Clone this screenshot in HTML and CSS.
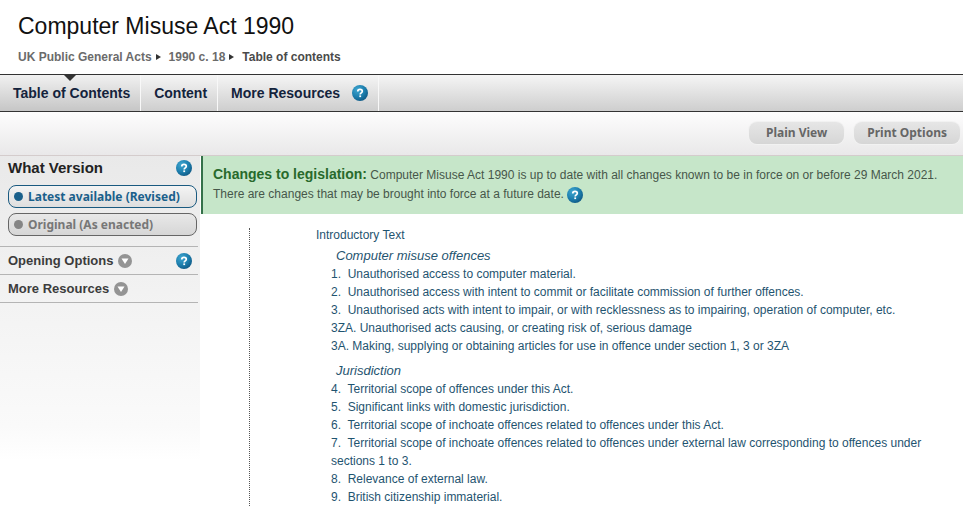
FILE: index.html
```
<!DOCTYPE html>
<html lang="en">
<head>
<meta charset="utf-8">
<title>Computer Misuse Act 1990</title>
<link rel="stylesheet" href="styles.css">
</head>
<body>
<svg class="defs" aria-hidden="true">
  <defs>
    <radialGradient id="blue" cx="0.35" cy="0.3" r="0.8">
      <stop offset="0" stop-color="#3fa6d0"/>
      <stop offset="0.55" stop-color="#1d7fae"/>
      <stop offset="1" stop-color="#0d5480"/>
    </radialGradient>
    <symbol id="help" viewBox="0 0 16 16">
      <circle cx="8" cy="8" r="8" fill="url(#blue)"/>
      <path d="M5.8 6.4C5.8 4.9 6.8 4.4 8 4.4s2.3.6 2.3 1.9c0 1.500-2.100 1.600-2.100 3.100" fill="none" stroke="#fff" stroke-width="1.700"/>
      <rect x="7.300" y="10.400" width="1.800" height="1.700" fill="#fff"/>
    </symbol>
    <symbol id="toggle" viewBox="0 0 14 14">
      <circle cx="7" cy="7" r="7" fill="#949494"/>
      <path d="M3.500 4.500h7L7 10z" fill="#fff"/>
    </symbol>
  </defs>
</svg>
<header class="header">
  <h1 class="title">Computer Misuse Act 1990</h1>
  <nav class="crumbs" aria-label="Breadcrumb">
    <a href="#acts">UK Public General Acts</a><i class="arrow"></i>
    <a href="#chapter">1990 c. 18</a><i class="arrow"></i>
    <span class="current">Table of contents</span>
  </nav>
</header>
<nav class="tabs" aria-label="Legislation">
  <a class="tab active" href="#toc">Table of Contents</a>
  <a class="tab" href="#content">Content</a>
  <div class="tab wide"><a href="#more">More Resources</a><a class="help" href="#help" aria-label="Help"><svg><use href="#help"/></svg></a></div>
</nav>
<div class="toolbar">
  <button class="tool" type="button">Plain View</button>
  <button class="tool" type="button">Print Options</button>
</div>
<div class="layout">
  <aside class="side">
    <section class="version">
      <div class="side-head"><h2 class="strong">What Version</h2><a class="help" href="#help" aria-label="Help"><svg><use href="#help"/></svg></a></div>
      <button class="pill selected" type="button"><i class="dot"></i>Latest available (Revised)</button>
      <button class="pill" type="button"><i class="dot"></i>Original (As enacted)</button>
    </section>
    <div class="side-row">
      <a class="expand" href="#opening">Opening Options <svg class="toggle"><use href="#toggle"/></svg></a>
      <a class="help" href="#help" aria-label="Help"><svg><use href="#help"/></svg></a>
    </div>
    <div class="side-row">
      <a class="expand" href="#resources">More Resources <svg class="toggle"><use href="#toggle"/></svg></a>
    </div>
  </aside>
  <main class="main">
    <section class="notice">
      <p><strong>Changes to legislation:</strong> Computer Misuse Act 1990 is up to date with all changes known to be in force on or before 29 March 2021. There are changes that may be brought into force at a future date. <a class="help" href="#help" aria-label="Help"><svg><use href="#help"/></svg></a></p>
    </section>
    <div class="contents">
      <p class="intro"><a href="#intro">Introductory Text</a></p>
      <h3 class="group"><a href="#offences">Computer misuse offences</a></h3>
      <ul class="items">
        <li><a href="#s1">1.&nbsp; Unauthorised access to computer material.</a></li>
        <li><a href="#s2">2.&nbsp; Unauthorised access with intent to commit or facilitate commission of further offences.</a></li>
        <li><a href="#s3">3.&nbsp; Unauthorised acts with intent to impair, or with recklessness as to impairing, operation of computer, etc.</a></li>
        <li><a href="#s3za">3ZA. Unauthorised acts causing, or creating risk of, serious damage</a></li>
        <li><a href="#s3a">3A. Making, supplying or obtaining articles for use in offence under section 1, 3 or 3ZA</a></li>
      </ul>
      <h3 class="group"><a href="#jurisdiction">Jurisdiction</a></h3>
      <ul class="items">
        <li><a href="#s4">4.&nbsp; Territorial scope of offences under this Act.</a></li>
        <li><a href="#s5">5.&nbsp; Significant links with domestic jurisdiction.</a></li>
        <li><a href="#s6">6.&nbsp; Territorial scope of inchoate offences related to offences under this Act.</a></li>
        <li><a href="#s7">7.&nbsp; Territorial scope of inchoate offences related to offences under external law corresponding to offences under sections 1 to 3.</a></li>
        <li><a href="#s8">8.&nbsp; Relevance of external law.</a></li>
        <li><a href="#s9">9.&nbsp; British citizenship immaterial.</a></li>
      </ul>
    </div>
  </main>
</div>
</body>
</html>
```
FILE: styles.css
```
* { box-sizing: border-box; }
body {
  margin: 0;
  background: #fff;
  color: #444;
  font: 12px/18px "Liberation Sans", Arial, sans-serif;
}
h1, h2, h3, p, ul { margin: 0; padding: 0; }
ul { list-style: none; }
a { color: inherit; text-decoration: none; }
button { font: inherit; cursor: pointer; }
.defs { position: absolute; width: 0; height: 0; }
.help, .help svg { display: block; width: 16px; height: 16px; }

.header { padding: 12px 18px 8px; }
.title { color: #111; font-size: 23px; line-height: 28px; font-weight: 400; }
.crumbs {
  display: flex;
  align-items: center;
  margin-top: 8px;
  color: #6b6b6b;
  font-weight: 700;
}
.arrow {
  margin: 0 8px 0 4px;
  border: 3px solid transparent;
  border-left: 5px solid #333;
  border-right: 0;
}
.current { color: #4a4a4a; }

.tabs {
  display: flex;
  height: 38px;
  border-top: 1px solid #333;
  border-bottom: 1px solid #333;
  background: linear-gradient(#f5f5f5, #cecece);
  color: #14233c;
  font-size: 14px;
  font-weight: 700;
}
.tab {
  position: relative;
  display: flex;
  align-items: center;
  padding: 0 10px 0 13px;
  border-right: 1px solid #f8f8f8;
}
.tab.active { background: linear-gradient(#f1f1f1, #c6c6c6); }
.tab.active::before {
  content: "";
  position: absolute;
  top: 0;
  left: 50%;
  margin-left: -6px;
  border: 6px solid transparent;
  border-top-color: #333;
  border-bottom: 0;
}
.wide { gap: 12px; }

.toolbar {
  display: flex;
  justify-content: flex-end;
  gap: 10px;
  height: 44px;
  padding: 10px 3px 0;
  border-bottom: 1px solid #d4cccc;
  background: linear-gradient(#fdfdfd, #e9e8e9);
}
.tool {
  height: 22px;
  padding: 0 13px;
  border: 0;
  border-radius: 8px;
  background: linear-gradient(#e6e6e6, #d6d6d6);
  box-shadow: 0 0 0 1px #f2f2f2;
  color: #666;
  font: 700 12px/22px "Noto Sans", "Open Sans", sans-serif;
}
.tool:first-child { padding: 0 17px; }

.layout { display: flex; align-items: stretch; }
.side {
  flex: 0 0 200px;
  padding-right: 2px;
  background: linear-gradient(#e9e9e9, #f3f3f3 150px, #fafafa 270px, #fff 305px);
  color: #3c3c3c;
}
.version { padding: 3px 1px 10px 8px; }
.side-head {
  display: flex;
  align-items: center;
  justify-content: space-between;
  padding-right: 5px;
}
.strong { color: #222; font-size: 15px; line-height: 18px; }
.pill {
  display: flex;
  align-items: center;
  gap: 5px;
  width: 100%;
  height: 23px;
  margin-top: 8px;
  padding: 0 5px;
  border: 1px solid #666;
  border-radius: 8px;
  background: linear-gradient(#e8e8e8, #d6d6d6);
  color: #777;
  font: 700 12px/20px "Noto Sans", "Open Sans", sans-serif;
}
.pill + .pill { margin-top: 5px; }
.pill.selected {
  border-color: #1a5a80;
  background: linear-gradient(#f4f4f4, #dedede);
  color: #1a608b;
}
.dot { width: 9px; height: 9px; border-radius: 50%; background: #858585; }
.selected .dot { background: #1a608b; }
.side-row {
  display: flex;
  align-items: center;
  justify-content: space-between;
  height: 28px;
  padding: 0 6px 0 8px;
  border-top: 1px solid #b4b4b4;
}
.side-row:last-child { height: 29px; border-bottom: 1px solid #b4b4b4; }
.expand { display: flex; align-items: center; gap: 5px; font-size: 13px; font-weight: 700; }
.toggle { width: 14px; height: 14px; }

.main { flex: 1; min-width: 0; display: flex; flex-direction: column; }
.notice {
  margin-left: 1px;
  padding: 9px 16px 10px 10px;
  border-left: 2px solid #35714a;
  background: #c6e6c9;
  color: #46574a;
  line-height: 19px;
}
.notice strong { color: #286a2c; font-size: 14px; }
.notice .help { display: inline-block; vertical-align: middle; }
.contents {
  flex: 1;
  margin: 14px 32px 0 49px;
  padding-left: 66px;
  border-left: 1px dotted #555;
  color: #1f5470;
}
.intro { margin-bottom: 4px; line-height: 14px; }
.group { padding-left: 20px; font-size: 13px; line-height: 19px; font-weight: 400; font-style: italic; }
.items { padding-left: 15px; margin-bottom: 6px; }
.items:last-child { margin-bottom: 0; }
```
